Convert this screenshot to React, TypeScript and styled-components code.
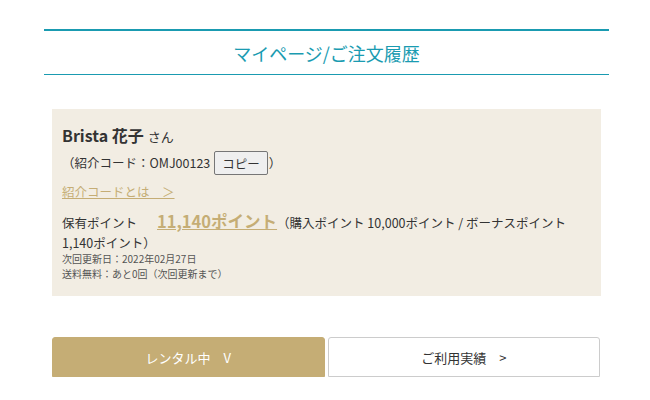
import styled, { createGlobalStyle } from 'styled-components'

const GlobalStyle = createGlobalStyle`
	body {
		margin: 0;
		background: #fff;
		font-family: "Noto Sans CJK JP", "Noto Sans", sans-serif;
		color: #333;
	}
`

const GOLD = `#c5ad75`
const TEAL = `#1a9bb1`

const PageStyled = styled.div`
	width: 565px;
	margin: 0 0 0 44px;
	padding-top: 29px;
`

const TitleStyled = styled.h1`
	margin: 0;
	border-top: 2px solid ${TEAL};
	border-bottom: 1px solid ${TEAL};
	height: 43px;
	display: flex;
	align-items: center;
	justify-content: center;
	font-size: 18px;
	font-weight: 400;
	color: ${TEAL};
`

const InfoBoxStyled = styled.section`
	margin: 34px 8px 0;
	background: #f2ede3;
	padding: 14px 10px 15px;
	font-size: 12.5px;
	line-height: 20px;
	color: #333;
`

const NameStyled = styled.div`
	font-size: 16px;
	font-weight: 700;
	line-height: 24px;
`

const HonorificStyled = styled.span`
	font-size: 13px;
	font-weight: 400;
	margin-left: 4px;
`

const CodeRowStyled = styled.div`
	display: flex;
	align-items: center;
	margin-top: 2px;
`

const CopyButtonStyled = styled.button`
	font-family: inherit;
	font-size: 12.5px;
	color: #333;
	background: #efefef;
	border: 1px solid #767676;
	border-radius: 2px;
	padding: 0 7px;
	height: 24px;
	margin: 0 1px 0 4px;
	cursor: pointer;
`

const LinkStyled = styled.a`
	display: inline-block;
	margin-top: 7px;
	color: ${GOLD};
	text-decoration: underline;
	cursor: pointer;
`

const PointsStyled = styled.div`
	margin-top: 11px;
`

const PointsValueStyled = styled.a`
	margin-left: 20px;
	font-size: 16.5px;
	line-height: 1;
	font-weight: 700;
	color: ${GOLD};
	text-decoration: underline;
`

const NotesStyled = styled.div`
	margin-top: -2px;
	font-size: 10px;
	line-height: 15px;
	color: #555;
`

const TabsStyled = styled.div`
	margin: 41px 9px 0 8px;
	display: grid;
	grid-template-columns: 1fr 1fr;
	gap: 3px;
`

const TabStyled = styled.button<{ $active: boolean }>`
	height: 40px;
	font-family: inherit;
	font-size: 13px;
	border-radius: 3px 3px 0 0;
	border: 1px solid ${({ $active }): string => ($active ? GOLD : `#ccc`)};
	background: ${({ $active }): string => ($active ? GOLD : `#fff`)};
	color: ${({ $active }): string => ($active ? `#fff` : `#333`)};
	cursor: pointer;
`

export default function App() {
	return (
		<>
			<GlobalStyle />
			<PageStyled>
				<TitleStyled>マイページ/ご注文履歴</TitleStyled>
				<InfoBoxStyled>
					<NameStyled>
						Brista 花子<HonorificStyled>さん</HonorificStyled>
					</NameStyled>
					<CodeRowStyled>
						（紹介コード：OMJ00123
						<CopyButtonStyled type="button">コピー</CopyButtonStyled>）
					</CodeRowStyled>
					<LinkStyled>紹介コードとは　＞</LinkStyled>
					<PointsStyled>
						保有ポイント
						<PointsValueStyled>11,140ポイント</PointsValueStyled>
						（購入ポイント 10,000ポイント / ボーナスポイント 1,140ポイント）
					</PointsStyled>
					<NotesStyled>
						<div>次回更新日：2022年02月27日</div>
						<div>送料無料：あと0回（次回更新まで）</div>
					</NotesStyled>
				</InfoBoxStyled>
				<TabsStyled>
					<TabStyled type="button" $active>
						レンタル中　V
					</TabStyled>
					<TabStyled type="button" $active={false}>
						ご利用実績　&gt;
					</TabStyled>
				</TabsStyled>
			</PageStyled>
		</>
	)
}
